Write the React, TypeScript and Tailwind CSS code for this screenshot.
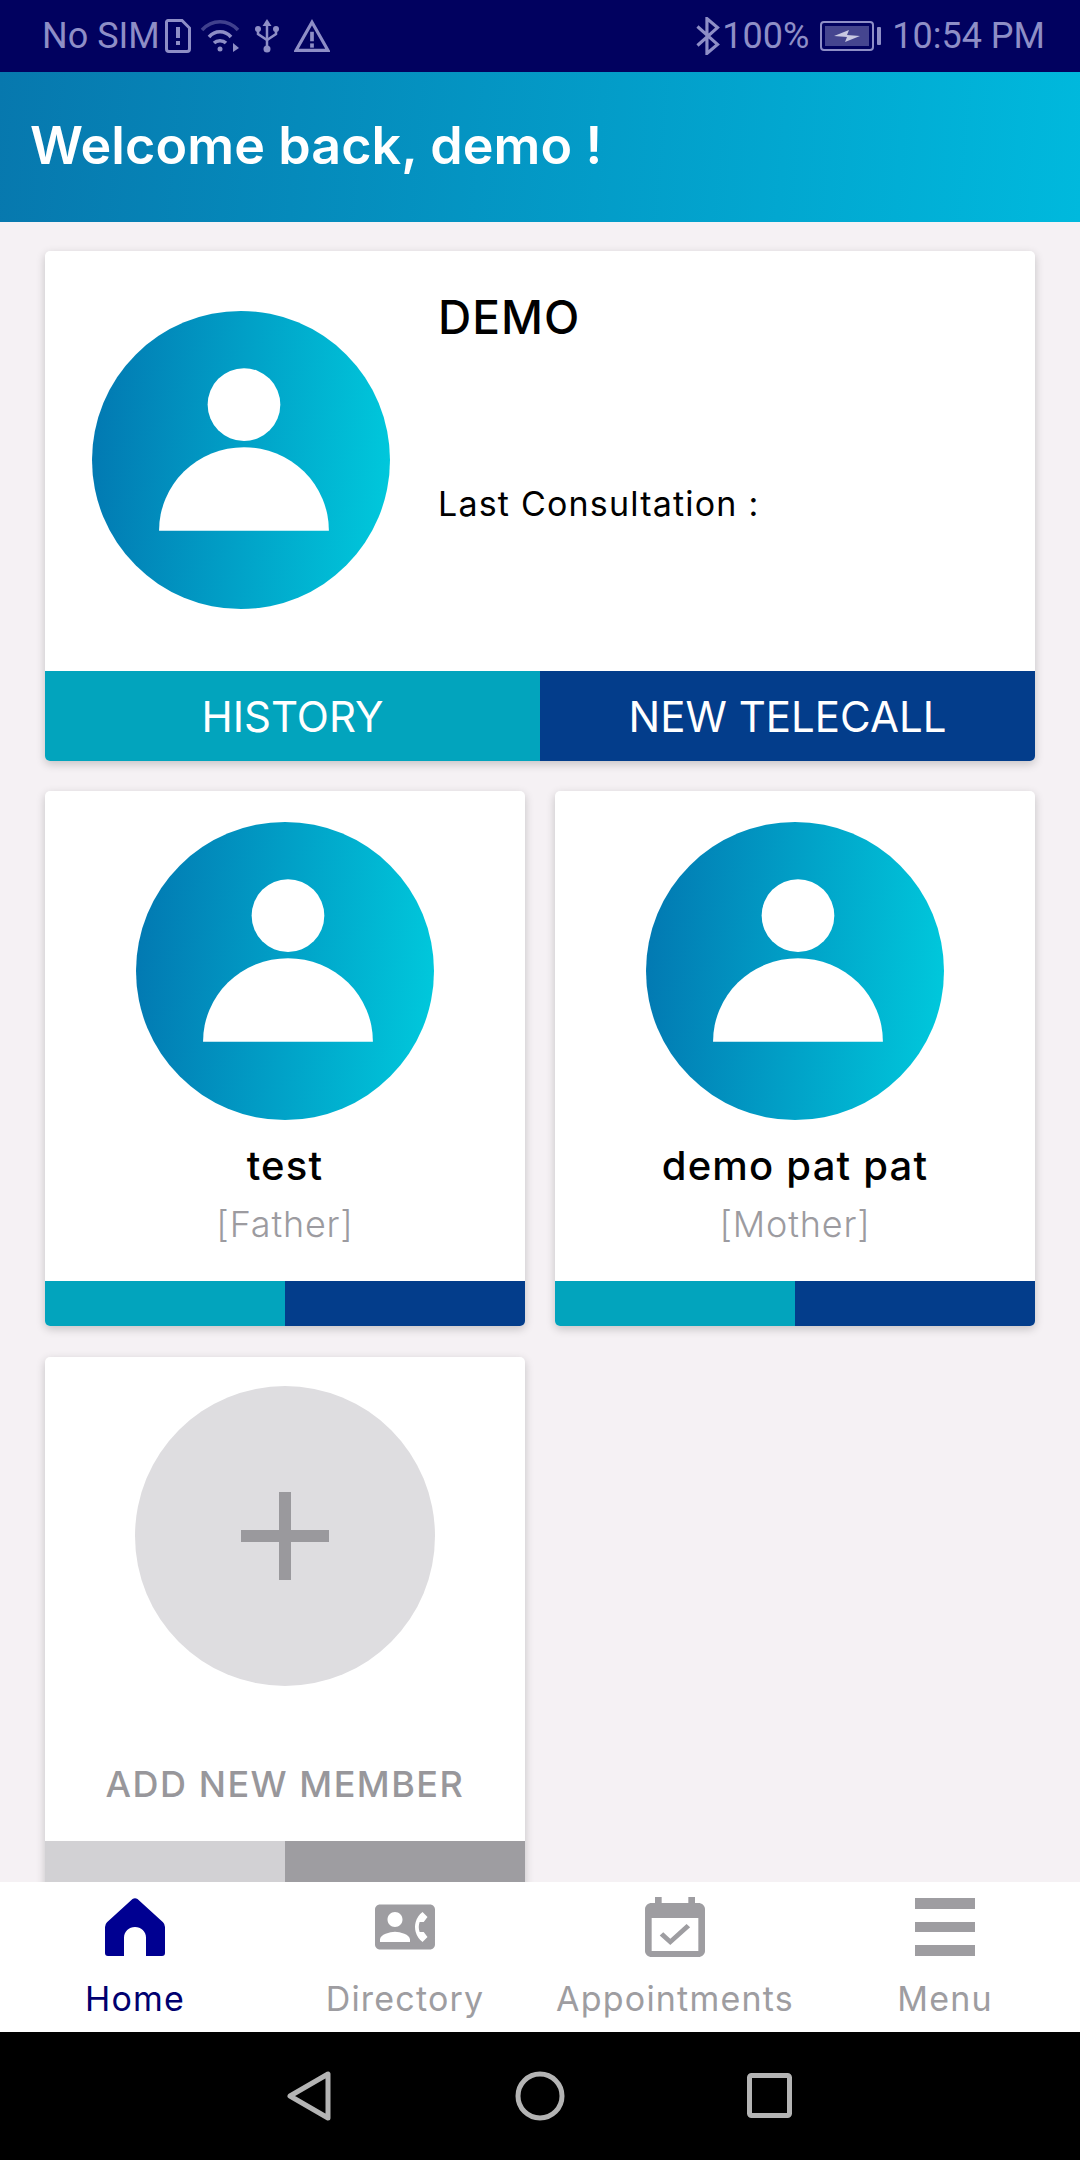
import React from 'react';
import { MdContactPhone } from 'react-icons/md';

const Avatar: React.FC = () => (
  <div className="w-[298px] h-[298px] shrink-0 rounded-full bg-[linear-gradient(94deg,#0277b1,#00cadd)]">
    <svg viewBox="0 0 100 100" className="w-full h-full" fill="#fff">
      <circle cx="51" cy="31.4" r="12.2" />
      <path d="M22.5 73.700A28.5 28 0 0 1 79.5 73.700Z" />
    </svg>
  </div>
);

const MemberCard: React.FC<{ name: string; relation: string }> = ({ name, relation }) => (
  <div className="h-[535px] bg-white rounded-[5px] shadow-[0_3px_10px_rgba(0,0,0,0.2)] flex flex-col overflow-hidden">
    <div className="flex-1 flex flex-col items-center pt-[31px]">
      <Avatar />
      <div className="mt-[27px] text-[40px] leading-[38px] font-medium text-black tracking-[1.2px]">{name}</div>
      <div className="mt-[20px] text-[36px] leading-[38px] font-light text-[#9c9ba0] tracking-[0.8px]">{relation}</div>
    </div>
    <div className="h-[45px] flex shrink-0">
      <div className="flex-1 bg-[#02a4bd]" />
      <div className="flex-1 bg-[#033d8b]" />
    </div>
  </div>
);

const AddMemberCard: React.FC = () => (
  <div className="h-[560px] bg-white rounded-[5px] shadow-[0_3px_10px_rgba(0,0,0,0.2)] flex flex-col overflow-hidden">
    <div className="h-[484px] shrink-0 flex flex-col items-center pt-[29px]">
      <div className="w-[300px] h-[300px] rounded-full bg-[#dedde0] flex items-center justify-center">
        <svg viewBox="0 0 88 88" className="w-[88px] h-[88px]" fill="#9a999d">
          <rect x="0" y="38" width="88" height="12" />
          <rect x="38" y="0" width="12" height="88" />
        </svg>
      </div>
      <div className="mt-[79px] text-[36px] leading-[38px] font-medium text-[#98979b] tracking-[1.5px] whitespace-nowrap">ADD NEW MEMBER</div>
    </div>
    <div className="flex-1 flex">
      <div className="flex-1 bg-[#d2d1d4]" />
      <div className="flex-1 bg-[#9e9da1]" />
    </div>
  </div>
);

const NavItem: React.FC<{ label: string; active?: boolean; children: React.ReactNode }> = ({ label, active, children }) => (
  <div className="flex flex-col items-center">
    <div className="h-[62px] mt-[14px] flex items-center justify-center">{children}</div>
    <div className={`mt-[22px] text-[34px] leading-[38px] tracking-[1.2px] ${active ? 'text-[#00006f]' : 'text-[#9e9da1]'}`}>{label}</div>
  </div>
);

const App: React.FC = () => {
  return (
    <div className="w-[1080px] h-[2160px] flex flex-col bg-[#f5f1f4] overflow-hidden font-['Inter',sans-serif]">
      {/* status bar */}
      <div className="h-[72px] shrink-0 bg-[#01015f] flex items-center justify-between pl-[42px] pr-[35px] text-[#8e8ec6] font-['Roboto',sans-serif] text-[36px]">
        <div className="flex items-center">
          <span>No SIM</span>
          <svg viewBox="0 0 26 34" className="w-[26px] h-[34px] ml-[5px]" fill="none" stroke="#8e8ec6" strokeWidth="3">
            <path d="M3 1.5H17L24.5 9V30A2.500 2.500 0 0 1 22 32.500H4A2.500 2.500 0 0 1 1.500 30V3A1.500 1.500 0 0 1 3 1.500Z" />
            <path d="M13 8V19" strokeWidth="4" />
            <path d="M13 22V26" strokeWidth="4" />
          </svg>
          <svg viewBox="0 0 40 34" className="w-[40px] h-[34px] ml-[9px]" fill="none" stroke="#8e8ec6" strokeWidth="3.500">
            <path d="M2 11C12 0 28 0 38 11" opacity="0.45" />
            <path d="M9 18C15 11 25 11 31 18" />
            <path d="M14 24C17 21 23 21 26 24" />
            <circle cx="20" cy="30" r="2.500" fill="#8e8ec6" stroke="none" />
            <path d="M33 24L39 29L33 33Z" fill="#8e8ec6" stroke="none" />
          </svg>
          <svg viewBox="0 0 24 36" className="w-[24px] h-[36px] ml-[15px]" fill="none" stroke="#8e8ec6" strokeWidth="2.500">
            <path d="M12 4V31" />
            <path d="M12 1L16.500 8H7.500Z" fill="#8e8ec6" stroke="none" />
            <circle cx="12" cy="31" r="3.500" fill="#8e8ec6" stroke="none" />
            <path d="M3 11V16L12 22L21 16V11" />
            <circle cx="3" cy="11" r="3" fill="#8e8ec6" stroke="none" />
            <circle cx="21" cy="11" r="3" fill="#8e8ec6" stroke="none" />
          </svg>
          <svg viewBox="0 0 34 32" className="w-[36px] h-[34px] ml-[15px]" fill="none" stroke="#8e8ec6" strokeWidth="3">
            <path d="M17 3L32 29.500H2Z" />
            <path d="M17 12V21" strokeWidth="3.500" />
            <path d="M17 23V27" strokeWidth="3.500" />
          </svg>
        </div>
        <div className="flex items-center">
          <svg viewBox="0 0 22 36" className="w-[24px] h-[38px]" fill="none" stroke="#8e8ec6" strokeWidth="3">
            <path d="M1 9L20 26L10 34.500V1.500L20 10L1 27" />
          </svg>
          <span className="ml-[2px]">100%</span>
          <div className="ml-[11px] w-[54px] h-[30px] rounded-[4px] border-2 border-[#8e8ec6] p-[3px] flex">
            <div className="flex-1 bg-[#45458f] flex items-center justify-center">
              <svg viewBox="0 0 26 12" className="w-[26px] h-[12px]" fill="#c9c9e2">
                <path d="M0 6L15 0L13 5L26 6L11 12L13 7Z" />
              </svg>
            </div>
          </div>
          <div className="ml-[3px] w-[4px] h-[18px] rounded-[1px] bg-[#8e8ec6]" />
          <span className="ml-[11px]">10:54 PM</span>
        </div>
      </div>

      {/* header */}
      <div className="h-[150px] shrink-0 bg-[linear-gradient(95deg,#0778ae,#00b9dd)] flex items-center pl-[30px] pb-[2px]">
        <h1 className="text-[52px] font-semibold text-white tracking-[0.1px]">Welcome back, demo !</h1>
      </div>

      {/* content */}
      <div className="flex-1 min-h-0 overflow-hidden px-[45px] pt-[29px]">
        <div className="h-[510px] bg-white rounded-[5px] shadow-[0_3px_10px_rgba(0,0,0,0.2)] flex flex-col overflow-hidden">
          <div className="flex-1 flex pl-[47px]">
            <div className="pt-[60px]">
              <Avatar />
            </div>
            <div className="ml-[48px] pt-[42px]">
              <div className="text-[46px] leading-[48px] font-medium text-black tracking-[1px]">DEMO</div>
              <div className="mt-[143px] text-[34px] leading-[40px] text-black tracking-[1.2px]">Last Consultation :</div>
            </div>
          </div>
          <div className="h-[90px] shrink-0 flex text-[42px] text-white">
            <div className="flex-1 bg-[#02a4bd] flex items-center justify-center">HISTORY</div>
            <div className="flex-1 bg-[#033d8b] flex items-center justify-center">NEW TELECALL</div>
          </div>
        </div>

        <div className="mt-[30px] grid grid-cols-2 gap-x-[30px] gap-y-[31px]">
          <MemberCard name="test" relation="[Father]" />
          <MemberCard name="demo pat pat" relation="[Mother]" />
          <AddMemberCard />
        </div>
      </div>

      {/* bottom nav */}
      <div className="h-[150px] shrink-0 bg-white grid grid-cols-4">
        <NavItem label="Home" active>
          <svg viewBox="0 0 60 60" className="w-[60px] h-[58px]" fill="#000091" preserveAspectRatio="none">
            <path d="M27.500 1Q30-.5 32.500 1L58 25Q60 27 60 30V57Q60 60 57 60H41V41A11 11 0 0 0 19 41V60H3Q0 60 0 57V30Q0 27 2 25Z" />
          </svg>
        </NavItem>
        <NavItem label="Directory">
          <MdContactPhone size={60} color="#9e9da1" />
        </NavItem>
        <NavItem label="Appointments">
          <svg viewBox="3 1 18 20" className="w-[60px] h-[60px]" fill="#9e9da1" preserveAspectRatio="none">
            <path d="M16.530 11.060L15.470 10l-4.880 4.880-2.120-2.120-1.060 1.060L10.590 17l5.940-5.940zM19 3h-1V1h-2v2H8V1H6v2H5c-1.110 0-1.990.9-1.990 2L3 19c0 1.100.89 2 2 2h14c1.100 0 2-.9 2-2V5c0-1.100-.9-2-2-2zm0 16H5V8h14v11z" />
          </svg>
        </NavItem>
        <NavItem label="Menu">
          <svg viewBox="0 0 60 58" className="w-[60px] h-[58px]" fill="#9e9da1">
            <rect x="0" y="0" width="60" height="11" />
            <rect x="0" y="24" width="60" height="10" />
            <rect x="0" y="47" width="60" height="11" />
          </svg>
        </NavItem>
      </div>

      {/* android nav */}
      <div className="h-[128px] shrink-0 bg-black">
        <svg viewBox="0 0 1080 128" className="w-full h-full" fill="none" stroke="#b4b4b4" strokeWidth="5" strokeLinejoin="round">
          <path d="M290 64L328 42V86Z" />
          <circle cx="540" cy="64" r="22" />
          <rect x="749.500" y="43.500" width="40" height="40" rx="2" />
        </svg>
      </div>
    </div>
  );
};

export default App;
